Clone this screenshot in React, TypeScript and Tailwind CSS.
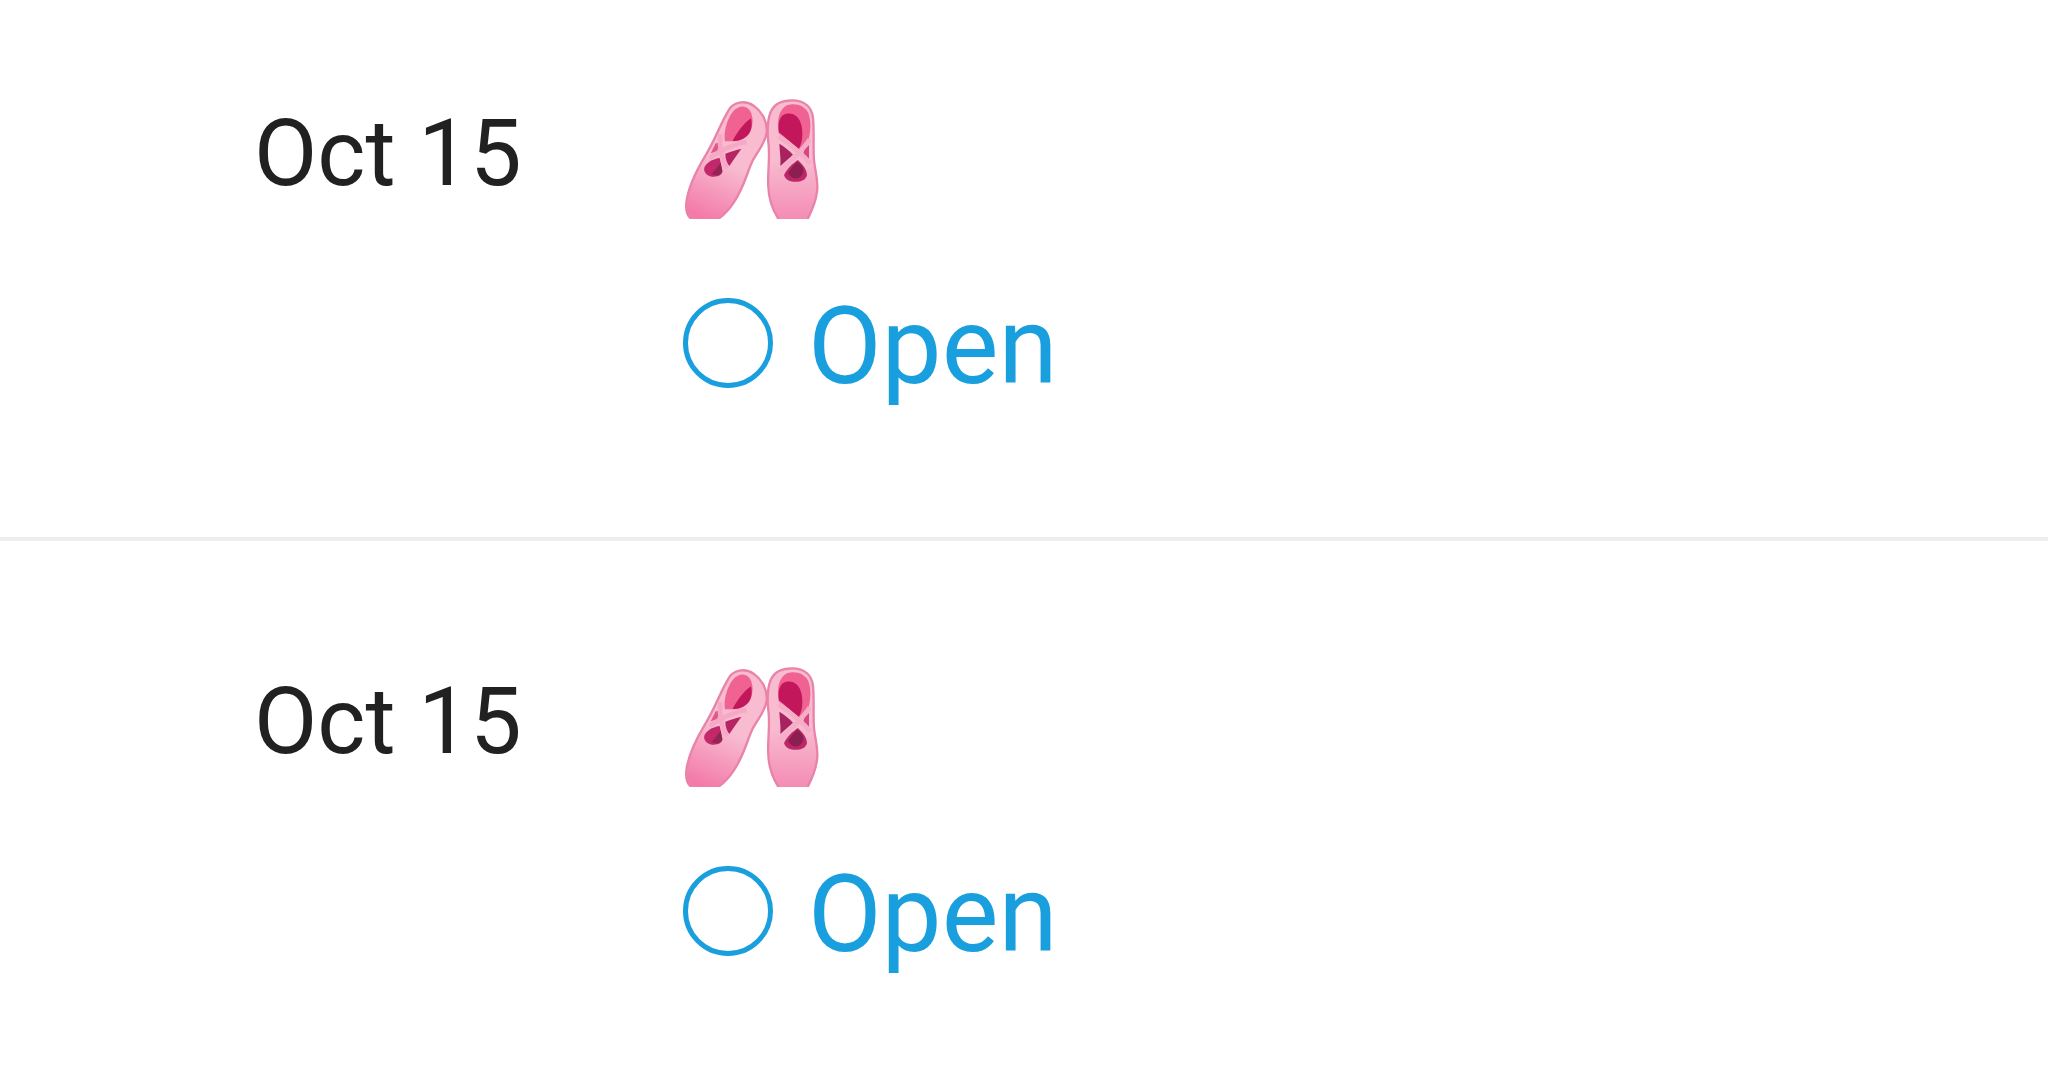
import { useState } from 'react';

interface Shift {
  id: string;
  date: string;
  status: string;
}

const shifts: Shift[] = [
  { id: 'shift-1', date: 'Oct 15', status: 'Open' },
  { id: 'shift-2', date: 'Oct 15', status: 'Open' },
];

function BalletShoes({ id }: { id: string }) {
  return (
    <svg viewBox="39 57 408 360" className="h-[120px] w-[136px]" role="img" aria-label="Ballet shoes">
      <defs>
        <linearGradient id={`${id}-left`} x1="0.6" y1="0" x2="0.3" y2="1">
          <stop offset="0.5" stopColor="#f8bbd0" />
          <stop offset="1" stopColor="#f37ba9" />
        </linearGradient>
        <linearGradient id={`${id}-right`} x1="0" y1="0" x2="0" y2="1">
          <stop offset="0.5" stopColor="#f8bbd0" />
          <stop offset="1" stopColor="#f48bb3" />
        </linearGradient>
      </defs>

      {/* Left shoe */}
      <path
        d="M68 420C52 410 46 396 49 368C54 325 76 277 105 229C133 185 151 132 174 94C188 64 226 60 251 77C276 94 293 126 290 158C287 186 266 210 250 238C231 276 222 323 192 366C179 386 164 404 140 420Z"
        fill={`url(#${id}-left)`}
        stroke="#e983aa"
        strokeWidth="7"
      />
      <path d="M165 184C158 151 179 87 211 80C238 75 251 103 247 133C242 165 224 179 194 184Z" fill="#f06292" />
      <path d="M188 182C202 158 218 132 243 115C250 145 239 168 218 177C207 182 199 184 188 182Z" fill="#c2185b" />
      <path d="M137 190L148 188L142 214L122 220Z" fill="#e4578b" />
      <path d="M104 260C114 244 132 236 149 234L157 271C157 288 141 291 126 290C110 287 98 275 104 260Z" fill="#c2286a" />
      <path d="M125 282L152 248L157 275C151 286 140 289 125 282Z" fill="#922456" />
      <path d="M166 221C183 216 198 209 214 207C201 223 190 242 178 258C170 248 166 235 166 221Z" fill="#b72464" />
      <path
        d="M119 234C139 219 160 209 181 200C199 192 212 188 229 186M151 163C148 195 152 235 171 263"
        fill="none"
        stroke="#f5a9c4"
        strokeWidth="14"
      />

      {/* Right shoe */}
      <path
        d="M328 421C306 388 296 355 295 320C292 284 300 238 296 197C291 157 290 123 303 94C315 67 345 60 371 61C404 63 426 81 429 114C433 154 429 197 432 240C435 274 446 302 441 335C437 370 424 396 411 421Z"
        fill={`url(#${id}-right)`}
        stroke="#e983aa"
        strokeWidth="7"
      />
      <path d="M326 160C322 131 323 95 344 80C364 66 404 72 416 101C424 128 422 157 414 184L387 209C367 190 346 174 326 160Z" fill="#f06292" />
      <path d="M327 157C323 128 328 105 350 101C373 98 390 112 395 139C399 164 398 187 386 208C365 190 347 173 327 157Z" fill="#c2185b" />
      <path d="M328 191C344 201 358 212 369 224L331 258C333 235 329 213 328 191Z" fill="#a82260" />
      <path d="M404 208L417 195L417 244L397 229Z" fill="#d94580" />
      <path d="M342 285C352 264 368 251 383 240C397 252 410 268 411 285C407 302 390 306 371 305C355 304 346 297 342 285Z" fill="#bd2667" />
      <path d="M354 280C363 263 374 252 383 246C396 255 402 267 400 276C393 299 369 304 354 280Z" fill="#8b1f52" />
      <path
        d="M326 169C354 188 389 214 421 250M419 178C403 205 365 241 330 274"
        fill="none"
        stroke="#f6adc7"
        strokeWidth="14"
      />
    </svg>
  );
}

export default function App() {
  const [selected, setSelected] = useState('');

  return (
    <main className="bg-white font-['Roboto',sans-serif]">
      <ul>
        {shifts.map((shift) => (
          <li
            key={shift.id}
            className="flex border-b-4 border-[#eeeeee] pt-[126px] pb-[126px] pl-[254px] first:pt-[99px] last:border-b-0 last:pb-0"
          >
            <time className="w-[429px] shrink-0 text-[92px] leading-[110px] text-[#212121]">{shift.date}</time>
            <div className="flex flex-col gap-16">
              <BalletShoes id={shift.id} />
              <label htmlFor={shift.id} className="flex cursor-pointer items-start gap-[35px] text-[#1a9fde]">
                <input
                  id={shift.id}
                  type="radio"
                  name="shift"
                  checked={selected === shift.id}
                  onChange={() => setSelected(shift.id)}
                  className="mt-[15px] size-[90px] appearance-none rounded-full border-[5px] border-[#1a9fde] checked:bg-[#1a9fde]"
                />
                <span className="text-[107px] leading-[128px]">{shift.status}</span>
              </label>
            </div>
          </li>
        ))}
      </ul>
    </main>
  );
}
